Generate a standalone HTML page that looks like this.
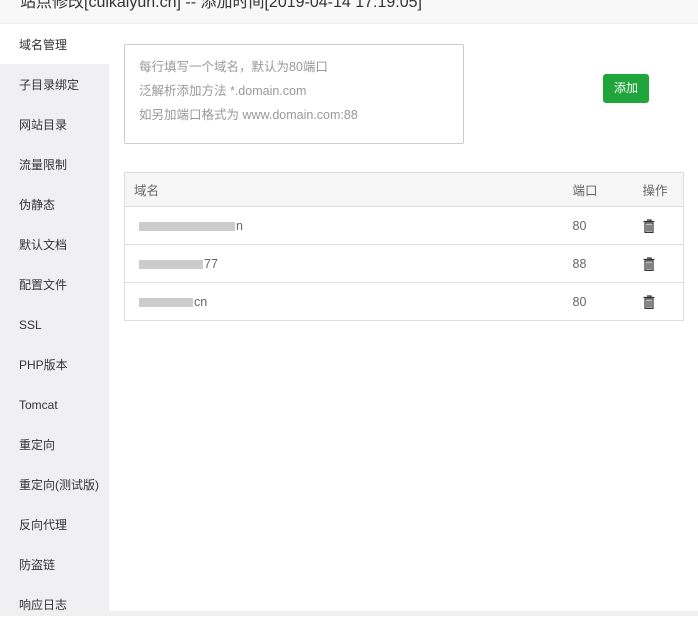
<!DOCTYPE html>
<html><head><meta charset="utf-8"><style>
*{margin:0;padding:0;box-sizing:border-box}
body{width:698px;height:616px;overflow:hidden;background:#fff;font-family:"Liberation Sans","Noto Sans CJK SC",sans-serif;position:relative;color:#333}
.title{position:absolute;left:0;top:0;width:698px;height:24px;background:#f8f8f8;border-bottom:1px solid #eee;overflow:hidden}
.title span{position:absolute;left:20px;top:-12px;font-size:16px;color:#333;white-space:nowrap}
.side{position:absolute;left:0;top:24px;width:109px;height:588px;background:#f0f0f2}
.side div{height:40px;line-height:42px;padding-left:19px;font-size:12px;color:#333}
.side div.on{background:#fff}
.bottom{position:absolute;left:0;top:611px;width:698px;height:5px;background:#f0f0f0}
textarea{position:absolute;left:124px;top:44px;width:340px;height:100px;border:1px solid #ccc;border-radius:2px;resize:none;padding:10px 14px;font-family:"Liberation Sans","Noto Sans CJK SC",sans-serif;font-size:12.5px;line-height:24px;color:#999}
.btn{position:absolute;left:603px;top:74px;width:46px;height:29px;background:#20a53a;color:#fff;border-radius:3px;font-size:12px;text-align:center;line-height:29px}
table{position:absolute;left:124px;top:172px;width:560px;border-collapse:collapse;font-size:12.5px;color:#666;border:1px solid #ddd}
td,th{border-top:1px solid #ddd;height:38px;text-align:left;font-weight:normal;padding:0 9px}
th{background:#f6f6f6;height:34px}
.blur{display:inline-block;height:9px;background:#ccc;vertical-align:middle;margin:0 1px 0 5px}
svg{vertical-align:middle}
</style></head><body>
<div class="title"><span>站点修改[cuikaiyun.cn] -- 添加时间[2019-04-14 17:19:05]</span></div>
<div class="side">
<div class="on">域名管理</div><div>子目录绑定</div><div>网站目录</div><div>流量限制</div><div>伪静态</div><div>默认文档</div><div>配置文件</div><div>SSL</div><div>PHP版本</div><div>Tomcat</div><div>重定向</div><div>重定向(测试版)</div><div>反向代理</div><div>防盗链</div><div>响应日志</div>
</div>
<div class="bottom"></div>
<textarea>每行填写一个域名，默认为80端口
泛解析添加方法 *.domain.com
如另加端口格式为 www.domain.com:88</textarea>
<div class="btn">添加</div>
<table>
<tr><th>域名</th><th style="width:70px">端口</th><th style="width:50px">操作</th></tr>
<tr><td><span class="blur" style="width:96px"></span>n</td><td>80</td><td><svg width="12" height="14" viewBox="0 0 12 14"><path d="M4 1h4v1.5M0.5 2.5h11M1.5 4h9M2 4v9.5h8V4M4 5.5v7M6 5.5v7M8 5.5v7" stroke="#333" stroke-width="1.2" fill="none"/></svg></td></tr>
<tr><td><span class="blur" style="width:64px"></span>77</td><td>88</td><td><svg width="12" height="14" viewBox="0 0 12 14"><path d="M4 1h4v1.5M0.5 2.5h11M1.5 4h9M2 4v9.5h8V4M4 5.5v7M6 5.5v7M8 5.5v7" stroke="#333" stroke-width="1.2" fill="none"/></svg></td></tr>
<tr><td><span class="blur" style="width:54px"></span>cn</td><td>80</td><td><svg width="12" height="14" viewBox="0 0 12 14"><path d="M4 1h4v1.5M0.5 2.5h11M1.5 4h9M2 4v9.5h8V4M4 5.5v7M6 5.5v7M8 5.5v7" stroke="#333" stroke-width="1.2" fill="none"/></svg></td></tr>
</table>
</body></html>
